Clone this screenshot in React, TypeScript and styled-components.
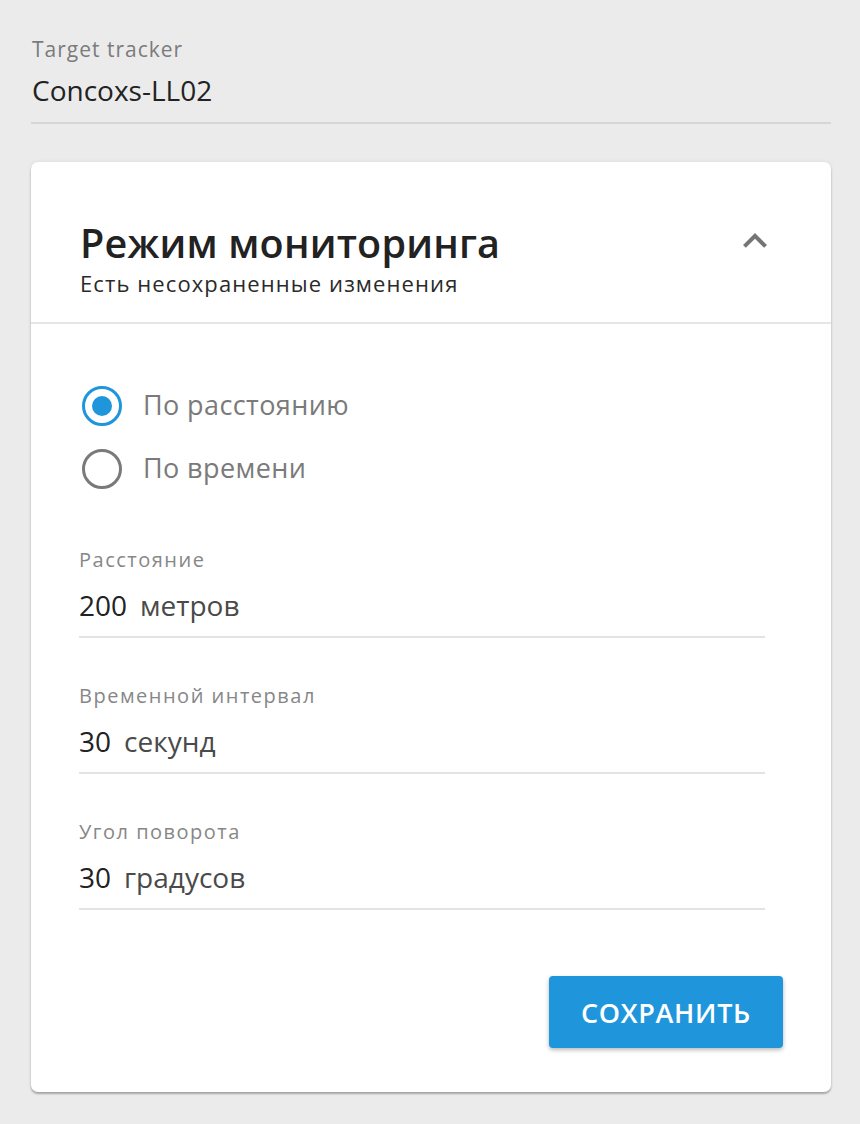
import React, { useState } from "react";
import styled, { createGlobalStyle } from "styled-components";

const GlobalStyle = createGlobalStyle`
  html, body {
    margin: 0;
    padding: 0;
    background: #ebebeb;
  }
  body {
    font-family: "Open Sans", "Liberation Sans", sans-serif;
    -webkit-font-smoothing: antialiased;
  }
`;

const Page = styled.div`
  box-sizing: border-box;
  width: 860px;
  min-height: 1124px;
  padding: 37px 29px 32px 31px;
  display: flex;
  flex-direction: column;
`;

const TrackerField = styled.div`
  display: flex;
  flex-direction: column;
  padding-left: 1px;
  padding-bottom: 14px;
  border-bottom: 2px solid #d6d6d6;
`;

const TrackerLabel = styled.div`
  font-size: 21px;
  line-height: 24px;
  color: #7b7b7b;
  letter-spacing: 1px;
`;

const TrackerValue = styled.div`
  margin-top: 11px;
  font-size: 28px;
  line-height: 36px;
  color: #222;
`;

const Card = styled.section`
  margin-top: 38px;
  background: #fff;
  border-radius: 7px;
  box-shadow: 0 2px 2px rgba(0, 0, 0, 0.28), 0 0 4px rgba(0, 0, 0, 0.07);
  display: flex;
  flex-direction: column;
`;

const CardHeader = styled.header`
  display: flex;
  align-items: flex-start;
  justify-content: space-between;
  padding: 57px 52px 25px 49px;
  border-bottom: 2px solid #e6e6e6;
`;

const HeaderText = styled.div`
  display: flex;
  flex-direction: column;
  gap: 2px;
`;

const Title = styled.h2`
  margin: 0;
  font-size: 39.5px;
  line-height: 48px;
  font-weight: 600;
  color: #222;
  letter-spacing: 0.2px;
`;

const Subtitle = styled.div`
  font-size: 22px;
  line-height: 28px;
  color: #2a2a2a;
  letter-spacing: 1.1px;
`;

const CollapseButton = styled.button`
  margin-top: -2px;
  width: 48px;
  height: 48px;
  padding: 0;
  border: 0;
  background: transparent;
  display: flex;
  align-items: center;
  justify-content: center;
  cursor: pointer;
`;

const CardBody = styled.div`
  display: flex;
  flex-direction: column;
  padding: 50px 48px 44px 48px;
`;

const RadioGroup = styled.div`
  display: flex;
  flex-direction: column;
`;

const RadioRow = styled.label`
  height: 63px;
  display: flex;
  align-items: center;
  gap: 21px;
  padding-left: 3px;
  cursor: pointer;
`;

const RadioCircle = styled.span<{ $checked: boolean }>`
  box-sizing: border-box;
  width: 40px;
  height: 40px;
  border-radius: 50%;
  border: 3.5px solid ${(p) => (p.$checked ? "#1f96dc" : "#7a7a7a")};
  display: flex;
  align-items: center;
  justify-content: center;
  &::after {
    content: "";
    width: 20px;
    height: 20px;
    border-radius: 50%;
    background: #1f96dc;
    display: ${(p) => (p.$checked ? "block" : "none")};
  }
`;

const RadioText = styled.span`
  font-size: 27px;
  color: #7a7a7a;
  letter-spacing: 0.4px;
  margin-top: -2px;
`;

const Fields = styled.div`
  display: flex;
  flex-direction: column;
  gap: 46px;
  margin-top: 48px;
  padding-right: 18px;
`;

const Field = styled.div`
  display: flex;
  flex-direction: column;
  padding-bottom: 13px;
  border-bottom: 2px solid #e3e3e3;
`;

const FieldLabel = styled.div`
  font-size: 20px;
  line-height: 24px;
  color: #878787;
  letter-spacing: 1.5px;
`;

const FieldValue = styled.div`
  margin-top: 15px;
  display: flex;
  align-items: baseline;
  gap: 13px;
  font-size: 28px;
  line-height: 36px;
`;

const NumberText = styled.span`
  color: #222;
`;

const Unit = styled.span`
  color: #4a4a4a;
`;

const Actions = styled.div`
  display: flex;
  justify-content: flex-end;
  margin-top: 66px;
`;

const SaveButton = styled.button`
  width: 234px;
  height: 72px;
  border: 0;
  border-radius: 4px;
  background: #1f96dc;
  color: #fff;
  font-family: "Open Sans", sans-serif;
  font-size: 27px;
  font-weight: 600;
  letter-spacing: 0.7px;
  box-shadow: 0 2px 4px rgba(0, 0, 0, 0.28);
  cursor: pointer;
`;

const ChevronUp = () => (
  <svg width="48" height="48" viewBox="0 0 24 24" fill="#757575">
    <path d="M12 8l-6 6 1.41 1.41L12 10.83l4.59 4.58L18 14z" />
  </svg>
);

const fields = [
  { label: "Расстояние", value: "200", unit: "метров" },
  { label: "Временной интервал", value: "30", unit: "секунд" },
  { label: "Угол поворота", value: "30", unit: "градусов" },
];

export default function App() {
  const [mode, setMode] = useState<"distance" | "time">("distance");
  return (
    <>
      <GlobalStyle />
      <Page>
        <TrackerField>
          <TrackerLabel>Target tracker</TrackerLabel>
          <TrackerValue>Concoxs-LL02</TrackerValue>
        </TrackerField>
        <Card>
          <CardHeader>
            <HeaderText>
              <Title>Режим мониторинга</Title>
              <Subtitle>Есть несохраненные изменения</Subtitle>
            </HeaderText>
            <CollapseButton aria-label="collapse">
              <ChevronUp />
            </CollapseButton>
          </CardHeader>
          <CardBody>
            <RadioGroup>
              <RadioRow onClick={() => setMode("distance")}>
                <RadioCircle $checked={mode === "distance"} />
                <RadioText>По расстоянию</RadioText>
              </RadioRow>
              <RadioRow onClick={() => setMode("time")}>
                <RadioCircle $checked={mode === "time"} />
                <RadioText>По времени</RadioText>
              </RadioRow>
            </RadioGroup>
            <Fields>
              {fields.map((f) => (
                <Field key={f.label}>
                  <FieldLabel>{f.label}</FieldLabel>
                  <FieldValue>
                    <NumberText>{f.value}</NumberText>
                    <Unit>{f.unit}</Unit>
                  </FieldValue>
                </Field>
              ))}
            </Fields>
            <Actions>
              <SaveButton>СОХРАНИТЬ</SaveButton>
            </Actions>
          </CardBody>
        </Card>
      </Page>
    </>
  );
}
